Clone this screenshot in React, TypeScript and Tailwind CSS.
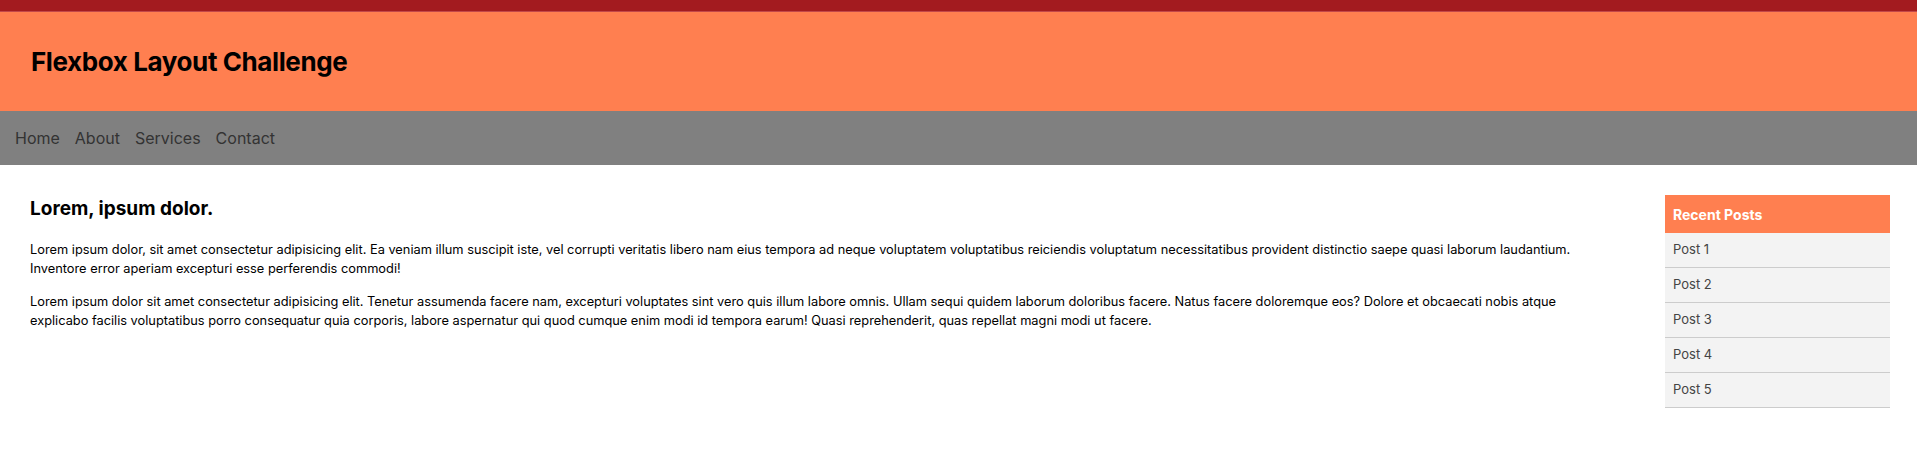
const navLinks = ["Home", "About", "Services", "Contact"];
const posts = ["Post 1", "Post 2", "Post 3", "Post 4", "Post 5"];

export default function App() {
  return (
    <div className="min-h-screen bg-white font-['Inter',sans-serif] text-black">
      <div className="h-[11px] bg-[#a31b1f]" />
      <div className="h-px bg-[#c2484a]" />
      <header className="flex h-[99px] items-center bg-[#ff7f50] px-[31px]">
        <h1 className="text-[26px] font-bold leading-[39px] tracking-[-0.4px]">Flexbox Layout Challenge</h1>
      </header>

      <nav className="flex h-[54px] items-center gap-[15px] bg-[#808080] px-[15px]">
        {navLinks.map((link) => (
          <a key={link} href="#" className="text-base leading-6 text-[#333]">
            {link}
          </a>
        ))}
      </nav>

      <div className="flex gap-[60px] pl-[30px] pr-[27px] pt-[30px]">
        <main className="flex-1">
          <h2 className="mb-[17px] text-[19px] font-bold leading-[28px]">Lorem, ipsum dolor.</h2>
          <p className="mb-[14px] text-[12.8px] leading-[19px]">
            Lorem ipsum dolor, sit amet consectetur adipisicing elit. Ea veniam illum suscipit iste, vel corrupti
            veritatis libero nam eius tempora ad neque voluptatem voluptatibus reiciendis voluptatum necessitatibus
            provident distinctio saepe quasi laborum laudantium. Inventore error aperiam excepturi esse perferendis
            commodi!
          </p>
          <p className="text-[12.8px] leading-[19px]">
            Lorem ipsum dolor sit amet consectetur adipisicing elit. Tenetur assumenda facere nam, excepturi voluptates
            sint vero quis illum labore omnis. Ullam sequi quidem laborum doloribus facere. Natus facere doloremque eos?
            Dolore et obcaecati nobis atque explicabo facilis voluptatibus porro consequatur quia corporis, labore
            aspernatur qui quod cumque enim modi id tempora earum! Quasi reprehenderit, quas repellat magni modi ut
            facere.
          </p>
        </main>

        <aside className="w-[225px] shrink-0">
          <div className="flex h-[38px] items-center bg-[#ff7f50] px-2 text-[14px] font-bold text-white">
            Recent Posts
          </div>
          <ul>
            {posts.map((post) => (
              <li
                key={post}
                className="flex h-[35px] items-center border-b border-[#cccccc] bg-[#f3f3f3] px-2 text-[13px] text-[#444]"
              >
                {post}
              </li>
            ))}
          </ul>
        </aside>
      </div>
    </div>
  );
}
